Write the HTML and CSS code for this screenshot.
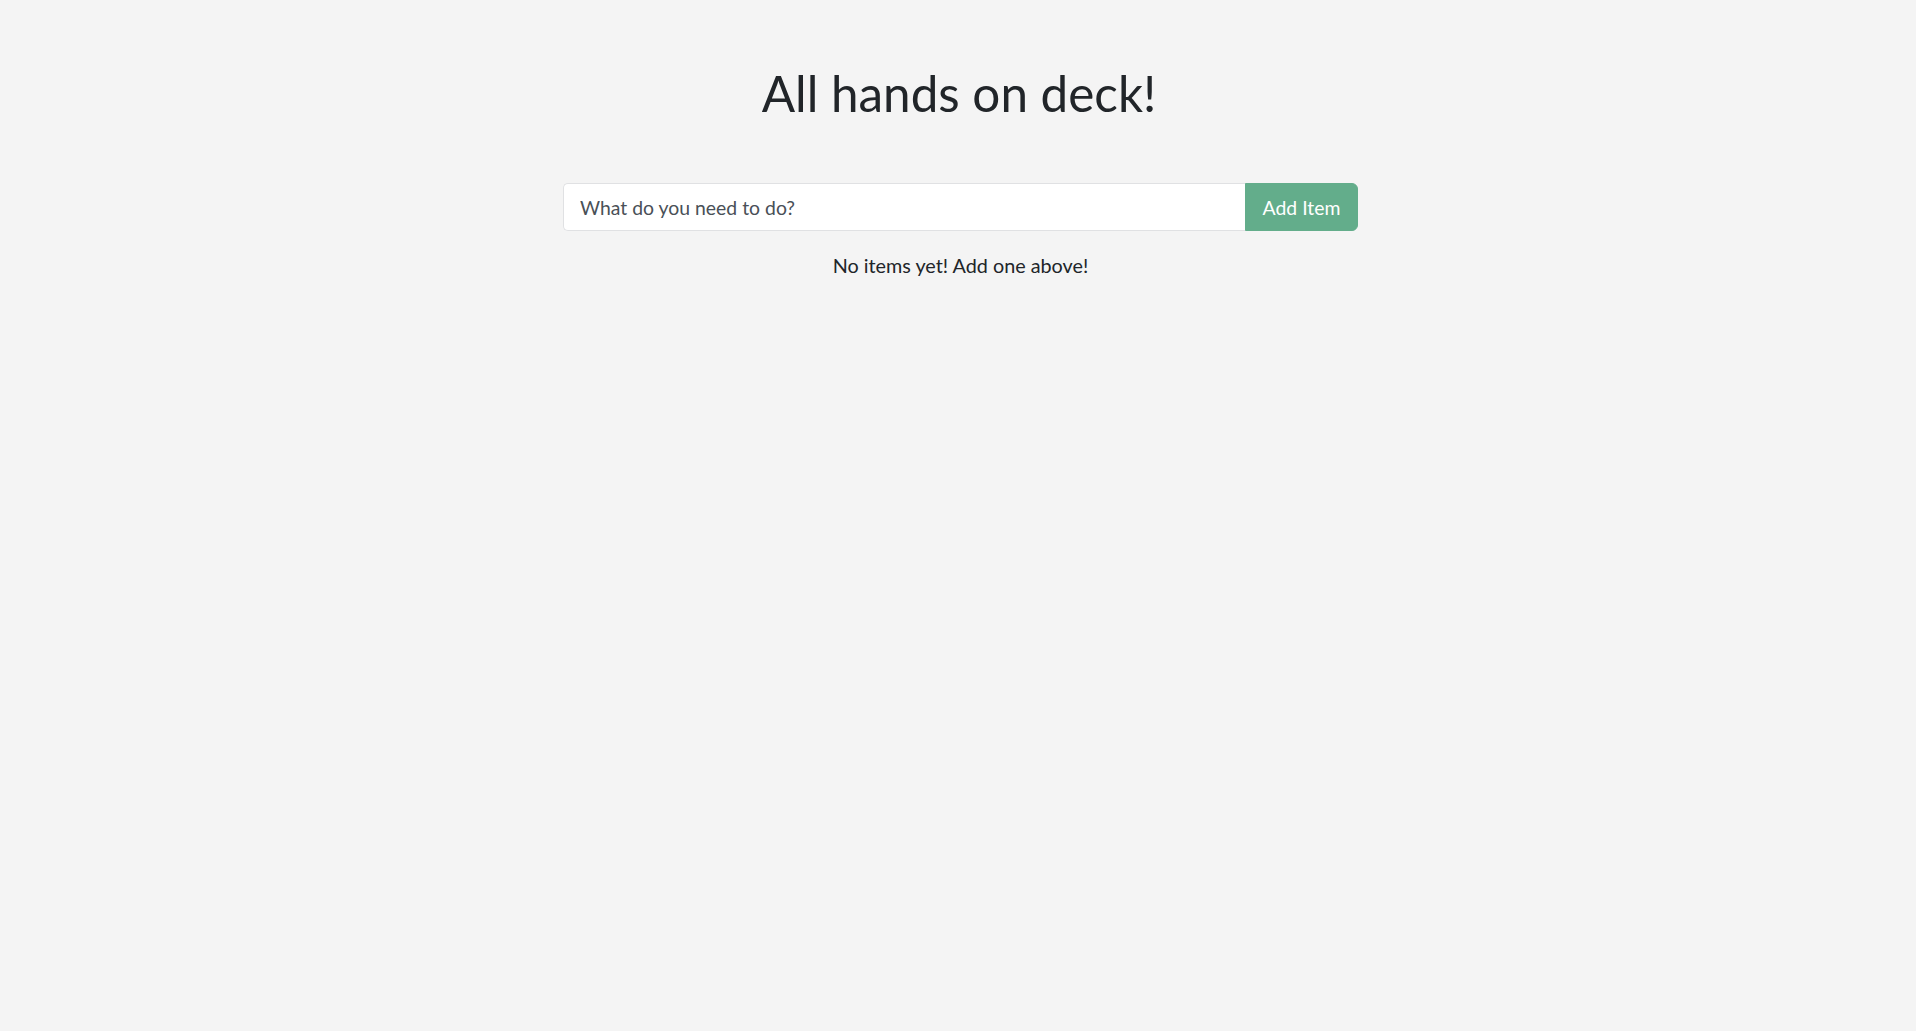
FILE: index.html
```html
<!DOCTYPE html>
<html lang="en">
<head>
<meta charset="utf-8">
<title>All hands on deck!</title>
<link rel="stylesheet" href="styles.css">
</head>
<body>
<main class="app">
  <h1 class="title">All hands on deck!</h1>
  <form class="add-form">
    <input class="add-input" type="text" placeholder="What do you need to do?">
    <button class="add-btn" type="button">Add Item</button>
  </form>
  <p class="empty">No items yet! Add one above!</p>
</main>
</body>
</html>
```
FILE: styles.css
```css
html, body {
  margin: 0;
  padding: 0;
  background: #f4f4f4;
  font-family: Lato, "Open Sans", sans-serif;
  color: #212529;
}
.app {
  display: flex;
  flex-direction: column;
  align-items: center;
  padding-top: 64px;
}
.title {
  margin: 0 0 0 2px;
  font-size: 49.4px;
  font-weight: 400;
  line-height: 1.2;
  text-align: center;
}
.add-form {
  display: flex;
  width: 795px;
  margin: 60px 0 0 5px;
}
.add-input {
  flex: 1;
  height: 48px;
  box-sizing: border-box;
  padding: 8px 16px;
  font-family: inherit;
  font-size: 19.4px;
  color: #495057;
  background: #fff;
  border: 1px solid #e0e1e3;
  border-right: none;
  border-radius: 5px 0 0 5px;
  outline: none;
}
.add-input::placeholder {
  color: #495057;
}
.add-btn {
  height: 48px;
  box-sizing: border-box;
  padding: 0 10px;
  font-family: inherit;
  font-size: 19.4px;
  white-space: nowrap;
  color: #fff;
  background: #63ad8b;
  border: 1px solid #63ad8b;
  border-radius: 0 6px 6px 0;
  width: 113px;
}
.empty {
  margin: 20px 0 0 5px;
  font-size: 19.8px;
  line-height: 1.5;
  text-align: center;
}
```
